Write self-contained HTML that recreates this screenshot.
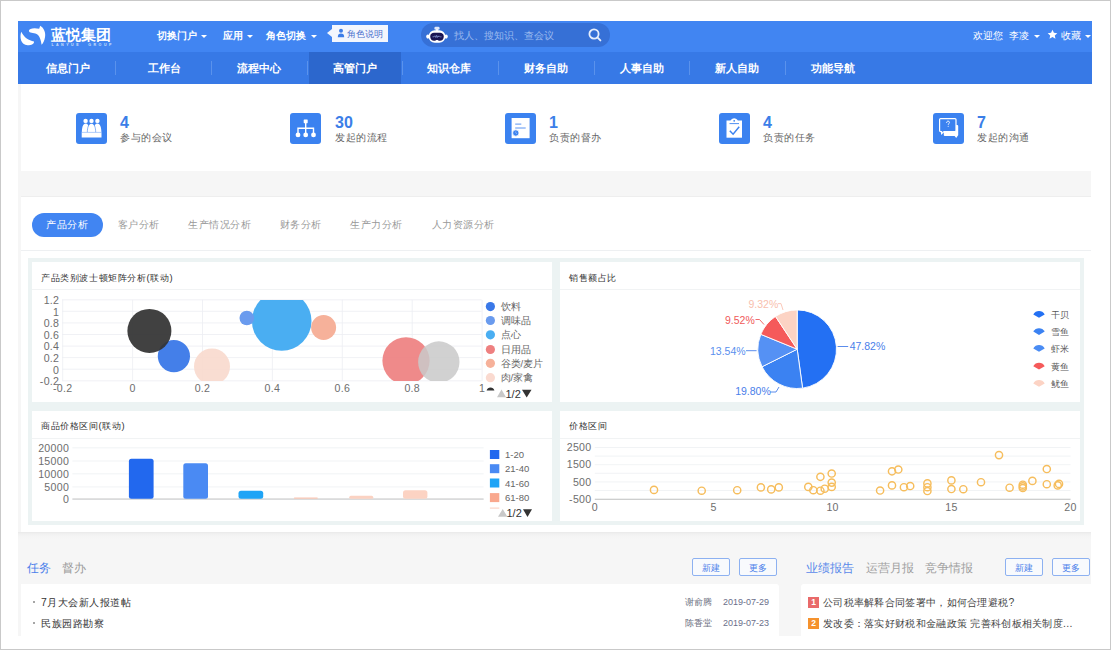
<!DOCTYPE html>
<html><head><meta charset="utf-8">
<style>
*{margin:0;padding:0;box-sizing:border-box}
html,body{width:1111px;height:650px;overflow:hidden;background:#fff}
body{position:relative;font-family:"Liberation Sans",sans-serif;color:#333}
#frame{position:absolute;left:0;top:0;width:1111px;height:650px;border:1px solid #c9c9c9;z-index:50}
.a{position:absolute;white-space:nowrap;line-height:1}
.bx{position:absolute}
svg{position:absolute;overflow:visible}
#top{position:absolute;left:18px;top:21px;width:1074px;height:31px;background:#4185f2}
#nav{position:absolute;left:18px;top:52px;width:1074px;height:32px;background:#3779e6}
.nv{position:absolute;top:52px;height:32px;line-height:32px;color:#fff;font-weight:bold;font-size:11.3px;text-align:center}
.sep{position:absolute;top:61px;width:1px;height:14px;background:#5a92ec}
.tw{color:#fff;font-size:10.3px;font-weight:bold}
.caret{position:absolute;width:0;height:0;border-left:3px solid transparent;border-right:3px solid transparent;border-top:3px solid #fff}
.ic{position:absolute;top:113px;width:31px;height:31px;background:#3b82f0;border-radius:3px}
.num{position:absolute;top:115px;font-size:16px;font-weight:bold;color:#3b7ee8;line-height:1}
.lab{position:absolute;top:133px;font-size:10.4px;letter-spacing:0.6px;color:#666;line-height:1}
.tab{position:absolute;top:213px;height:23.5px;line-height:23.5px;font-size:10.4px;letter-spacing:0.5px;color:#999;padding:0 14.5px;white-space:nowrap}
.tab.on{background:#4185f2;color:#fff;border-radius:12px}
.cell{position:absolute;background:#fff;overflow:hidden}
.ct{position:absolute;left:9px;top:10px;font-size:9.4px;letter-spacing:0.6px;color:#333;line-height:1;white-space:nowrap}
.cd{position:absolute;left:0;right:0;top:27px;height:1px;background:#f2f4f5}
.ax{font-family:"Liberation Sans",sans-serif;font-size:10.6px;letter-spacing:0.3px;fill:#6e6e6e}
.lg{font-size:9.5px;color:#666}
.btn{position:absolute;top:558px;width:38px;height:18px;border:1px solid #8db1f1;border-radius:2px;background:#f8fafd;color:#4a80ea;font-size:9px;line-height:19px;text-align:center}
.badge{width:11px;height:10.5px;color:#fff;font-size:8.5px;line-height:10.5px;text-align:center;font-weight:bold}
</style></head><body>
<div id="frame"></div>
<!-- header -->
<div id="top"></div>
<div id="nav"></div>
<svg style="left:18px;top:22px" width="40" height="28" viewBox="0 0 40 28">
<path fill="#fff" d="M3.3 9.8 C1.4 15 2.8 23.2 9.6 23.2 C13.6 23.2 16.4 21.8 16 19.5 C10.8 18.6 6 15.6 3.3 9.8 Z"/>
<path fill="#fff" d="M10.9 8.8 C11 6.6 15.6 5.6 21.2 6.8 L22.2 3.8 C26 6 28 11 27 15.2 C26.4 18.6 25.2 21.2 23.6 22.8 C23 18.4 21.8 13.8 18.6 12 C15.6 10.6 11 11.4 10.9 8.8 Z"/>
</svg>
<div class="a" style="left:50.5px;top:26.5px;font-size:15.4px;color:#fff;font-weight:bold">蓝悦集团</div>
<svg style="left:51px;top:42px" width="61" height="4" viewBox="0 0 61 4"><text x="0.5" y="3.6" font-size="3.6" fill="#cfe0fb" font-family="Liberation Sans" font-weight="bold" textLength="60" lengthAdjust="spacing">L A N Y U E &#160; &#160; G R O U P</text></svg>
<div class="a tw" style="left:156.5px;top:30.5px">切换门户</div><div class="caret" style="left:201px;top:35px"></div>
<div class="a tw" style="left:222.5px;top:30.5px">应用</div><div class="caret" style="left:247px;top:35px"></div>
<div class="a tw" style="left:266px;top:30.5px">角色切换</div><div class="caret" style="left:311px;top:35px"></div>
<div class="bx" style="left:332px;top:25px;width:56px;height:17px;background:#f3f6fd"></div>
<div class="bx" style="left:327px;top:29px;width:0;height:0;border-top:4px solid transparent;border-bottom:4px solid transparent;border-right:5px solid #f3f6fd"></div>
<svg style="left:337px;top:28px" width="8" height="10" viewBox="0 0 8 10"><circle cx="4" cy="2.8" r="2" fill="#3d7de8"/><path d="M0.8 9.2 C0.8 6.6 2 5.5 4 5.5 C6 5.5 7.2 6.6 7.2 9.2 Z" fill="#3d7de8"/></svg>
<div class="a" style="left:347px;top:29.5px;font-size:9px;color:#4a70cc;font-weight:500">角色说明</div>
<!-- search -->
<div class="bx" style="left:421px;top:23px;width:189px;height:24px;border-radius:12px;background:#3670d6"></div>
<svg style="left:426px;top:26px" width="22" height="18" viewBox="0 0 22 18">
<rect x="8.4" y="0.8" width="5.2" height="3" rx="1.3" fill="#dfe8fb"/>
<rect x="10" y="3" width="2" height="2" fill="#eef3fd"/>
<ellipse cx="1.9" cy="10.6" rx="1.7" ry="2.1" fill="#fff"/><ellipse cx="20.1" cy="10.6" rx="1.7" ry="2.1" fill="#fff"/>
<rect x="2.6" y="4.2" width="16.8" height="12.6" rx="6.2" fill="#fff"/>
<path d="M4.2 10.6 C4.2 8 6 6.8 8 6.8 H14 C16 6.8 17.8 8 17.8 10.6 C17.8 13.4 16 14.8 14 14.8 C12.6 14.8 12 14 11 14 C10 14 9.4 14.8 8 14.8 C6 14.8 4.2 13.4 4.2 10.6 Z" fill="#1b1553"/>
<path d="M6.5 10.8 H8 L8.8 9.8 L9.6 11.4 L10.4 9.4 L11.2 11.6 L12 9.8 L12.8 11 L13.6 10.2 L14.4 10.8 H15.5" stroke="#9fb6f0" stroke-width="0.6" fill="none"/>
</svg>
<div class="a" style="left:453.5px;top:30.5px;font-size:9.6px;color:#98b8ee">找人、搜知识、查会议</div>
<svg style="left:587px;top:27px" width="16" height="16" viewBox="0 0 16 16"><circle cx="7" cy="7" r="4.6" stroke="#e6eefc" stroke-width="1.8" fill="none"/><path d="M10.4 10.4 L13.4 13.4" stroke="#e6eefc" stroke-width="1.9" stroke-linecap="round"/></svg>
<!-- right -->
<div class="a tw" style="left:973px;top:30.5px;font-weight:500">欢迎您</div>
<div class="a tw" style="left:1009px;top:30.5px;font-weight:500">李凌</div><div class="caret" style="left:1034px;top:35px"></div>
<svg style="left:1047px;top:29px" width="11" height="11" viewBox="0 0 24 24"><path fill="#fff" d="M12 1.5 L15.1 8.2 L22.5 9 L17 14 L18.5 21.3 L12 17.6 L5.5 21.3 L7 14 L1.5 9 L8.9 8.2 Z"/></svg>
<div class="a tw" style="left:1060.5px;top:30.5px;font-weight:500">收藏</div><div class="caret" style="left:1085px;top:35px"></div>
<!-- nav -->
<div class="bx" style="left:309px;top:52px;width:92px;height:32px;background:#2c67cd"></div>
<div class="sep" style="left:115px"></div><div class="sep" style="left:211px"></div><div class="sep" style="left:307px"></div><div class="sep" style="left:402px"></div><div class="sep" style="left:498px"></div><div class="sep" style="left:594px"></div><div class="sep" style="left:689px"></div><div class="sep" style="left:785px"></div>
<div class="nv" style="left:28.0px;width:80px">信息门户</div>
<div class="nv" style="left:124.0px;width:80px">工作台</div>
<div class="nv" style="left:219.0px;width:80px">流程中心</div>
<div class="nv" style="left:314.6px;width:80px">高管门户</div>
<div class="nv" style="left:409.0px;width:80px">知识仓库</div>
<div class="nv" style="left:505.6px;width:80px">财务自助</div>
<div class="nv" style="left:601.6px;width:80px">人事自助</div>
<div class="nv" style="left:696.6px;width:80px">新人自助</div>
<div class="nv" style="left:793.0px;width:80px">功能导航</div>
<!-- stats -->
<div class="bx" style="left:18px;top:171px;width:1073px;height:26px;background:#f6f6f6;border-bottom:1px solid #eeeeee"></div>
<div class="bx" style="left:18px;top:84px;width:3px;height:552px;background:#f6f6f6"></div>
<div class="ic" style="left:76px"><svg style="left:0;top:0" width="31" height="31" viewBox="0 0 31 31">
<path d="M5.8 19.6 C5.8 14.6 7 10.4 9.6 10.4 C11.6 10.4 12.6 12.4 12.9 14.5 L12.9 19.6 Z" fill="#fff"/>
<path d="M25.4 19.6 C25.4 14.6 24.2 10.4 21.4 10.4 C19.4 10.4 18.4 12.4 18.1 14.5 L18.1 19.6 Z" fill="#fff"/>
<path d="M11.3 19.8 C11.3 14 12.8 10.4 15.5 10.4 C18.2 10.4 19.7 14 19.7 19.8 Z" fill="#fff" stroke="#3b82f0" stroke-width="0.6"/>
<circle cx="9.6" cy="7.9" r="2.2" fill="#fff"/><circle cx="15.5" cy="7.9" r="2.2" fill="#fff"/><circle cx="21.4" cy="7.9" r="2.2" fill="#fff"/>
<rect x="5.7" y="19.5" width="19.8" height="5" fill="#fff"/>
<path d="M5.7 19.3 H25.5" stroke="#9cc0f8" stroke-width="0.5"/>
</svg></div>
<div class="ic" style="left:290px"><svg style="left:0;top:0" width="31" height="31" viewBox="0 0 31 31">
<rect x="13.7" y="6.5" width="4" height="3.7" rx="0.6" fill="#fff"/>
<path d="M15.7 10 V21 M8 21.5 V15.3 H23.5 V21.5" stroke="#fff" stroke-width="1.4" fill="none"/>
<circle cx="8" cy="21.9" r="2.4" fill="#fff"/><circle cx="15.7" cy="21.9" r="2.4" fill="#fff"/><circle cx="23.5" cy="21.9" r="2.4" fill="#fff"/>
</svg></div>
<div class="ic" style="left:504.5px"><svg style="left:0;top:0" width="31" height="31" viewBox="0 0 31 31">
<rect x="6.6" y="5" width="18" height="20.2" fill="#fff"/>
<path d="M10.2 11.1 H16.3 M10.2 15 H20.7" stroke="#5a94f2" stroke-width="1" fill="none"/>
<circle cx="10.8" cy="20" r="3.2" fill="#3b82f0" stroke="#fff" stroke-width="0.8"/>
<path d="M10.8 18.3 V20 L12.2 21" stroke="#9ec0f8" stroke-width="0.7" fill="none"/>
</svg></div>
<div class="ic" style="left:718.5px"><svg style="left:0;top:0" width="31" height="31" viewBox="0 0 31 31">
<rect x="7.5" y="7.5" width="15.5" height="17.2" fill="#fff"/>
<path d="M11 10.3 C11 7.5 12.5 5.3 15.2 5.3 C17.9 5.3 19.3 7.5 19.3 10.3 Z" fill="#fff"/>
<path d="M10.5 10.6 H20" stroke="#3b82f0" stroke-width="0.9"/>
<circle cx="15.2" cy="7.8" r="0.9" fill="#3b82f0"/>
<path d="M10.8 17.8 L14.1 21.2 L20.2 13.8" stroke="#3b82f0" stroke-width="1.5" fill="none"/>
</svg></div>
<div class="ic" style="left:932.5px"><svg style="left:0;top:0" width="31" height="31" viewBox="0 0 31 31">
<path d="M10.8 13 Q10.8 12 11.8 12 H24.2 Q25.2 12 25.2 13 V22 Q25.2 23 24.2 23 H24.6 L23.2 25 L21.6 23 H11.8 Q10.8 23 10.8 22 Z" fill="#fff"/>
<path d="M7.6 5.6 H22 Q23 5.6 23 6.6 V17.6 Q23 18.6 22 18.6 H11 L8.6 20.6 V18.6 H7.6 Q6.6 18.6 6.6 17.6 V6.6 Q6.6 5.6 7.6 5.6 Z" fill="#3b82f0" stroke="#fff" stroke-width="1.2"/>
<path d="M13.6 10 C13.6 8.7 14.3 8.1 15.1 8.1 C15.9 8.1 16.5 8.7 16.5 9.4 C16.5 10.4 15.2 10.6 15.2 11.8" stroke="#fff" stroke-width="0.9" fill="none"/>
<circle cx="15.2" cy="13.2" r="0.55" fill="#fff"/>
</svg></div>
<div class="num" style="left:120px">4</div><div class="lab" style="left:120px">参与的会议</div>
<div class="num" style="left:335px">30</div><div class="lab" style="left:335px">发起的流程</div>
<div class="num" style="left:549px">1</div><div class="lab" style="left:549px">负责的督办</div>
<div class="num" style="left:763px">4</div><div class="lab" style="left:763px">负责的任务</div>
<div class="num" style="left:977px">7</div><div class="lab" style="left:977px">发起的沟通</div>
<!-- tabs section -->
<div class="bx" style="left:21px;top:197px;width:1070px;height:335px;background:#fff"></div>
<div class="bx" style="left:21px;top:250px;width:1070px;height:1px;background:#eef0f2"></div>
<div class="tab on" style="left:31.8px;width:71.5px">产品分析</div>
<div class="tab" style="left:103px">客户分析</div>
<div class="tab" style="left:173.5px">生产情况分析</div>
<div class="tab" style="left:265.2px">财务分析</div>
<div class="tab" style="left:335.8px">生产力分析</div>
<div class="tab" style="left:417.3px">人力资源分析</div>
<div class="bx" style="left:28px;top:258px;width:1056px;height:267px;background:#ecf3f3"></div>
<div class="cell" style="left:32px;top:262px;width:520px;height:140px"></div>
<div class="cell" style="left:560px;top:262px;width:520px;height:140px"></div>
<div class="cell" style="left:32px;top:411px;width:520px;height:110px"></div>
<div class="cell" style="left:560px;top:411px;width:520px;height:110px"></div>
<div class="a ct" style="left:41px;top:272.5px">产品类别波士顿矩阵分析(联动)</div>
<div class="a ct" style="left:569px;top:272.5px">销售额占比</div>
<div class="a ct" style="left:41px;top:420.5px">商品价格区间(联动)</div>
<div class="a ct" style="left:569px;top:420.5px">价格区间</div>
<svg style="left:0;top:0" width="1111" height="650" viewBox="0 0 1111 650">
<defs><clipPath id="c1"><rect x="62" y="299.9" width="419.5" height="81"/></clipPath></defs>
<line x1="32" x2="552" y1="289.5" y2="289.5" stroke="#f1f3f4" stroke-width="1"/>
<line x1="560" x2="1080" y1="289.5" y2="289.5" stroke="#f1f3f4" stroke-width="1"/>
<line x1="32" x2="552" y1="438.5" y2="438.5" stroke="#f1f3f4" stroke-width="1"/>
<line x1="560" x2="1080" y1="438.5" y2="438.5" stroke="#f1f3f4" stroke-width="1"/>
<line x1="62" x2="481.5" y1="380.8" y2="380.8" stroke="#eceef2" stroke-width="0.8"/>
<text class="ax" x="59.3" y="385.1" text-anchor="end">-0.2</text>
<line x1="62" x2="481.5" y1="369.2" y2="369.2" stroke="#eceef2" stroke-width="0.8"/>
<text class="ax" x="59.3" y="373.5" text-anchor="end">0</text>
<line x1="62" x2="481.5" y1="357.6" y2="357.6" stroke="#eceef2" stroke-width="0.8"/>
<text class="ax" x="59.3" y="361.9" text-anchor="end">0.2</text>
<line x1="62" x2="481.5" y1="346.1" y2="346.1" stroke="#eceef2" stroke-width="0.8"/>
<text class="ax" x="59.3" y="350.4" text-anchor="end">0.4</text>
<line x1="62" x2="481.5" y1="334.5" y2="334.5" stroke="#eceef2" stroke-width="0.8"/>
<text class="ax" x="59.3" y="338.8" text-anchor="end">0.6</text>
<line x1="62" x2="481.5" y1="322.9" y2="322.9" stroke="#eceef2" stroke-width="0.8"/>
<text class="ax" x="59.3" y="327.2" text-anchor="end">0.8</text>
<line x1="62" x2="481.5" y1="311.3" y2="311.3" stroke="#eceef2" stroke-width="0.8"/>
<text class="ax" x="59.3" y="315.6" text-anchor="end">1</text>
<line x1="62" x2="481.5" y1="299.8" y2="299.8" stroke="#eceef2" stroke-width="0.8"/>
<text class="ax" x="59.3" y="304.1" text-anchor="end">1.2</text>
<line x1="62.7" x2="62.7" y1="299.9" y2="380.9" stroke="#eceef2" stroke-width="0.8"/>
<text class="ax" x="62.7" y="391.8" text-anchor="middle">-0.2</text>
<line x1="132.6" x2="132.6" y1="299.9" y2="380.9" stroke="#eceef2" stroke-width="0.8"/>
<text class="ax" x="132.6" y="391.8" text-anchor="middle">0</text>
<line x1="202.5" x2="202.5" y1="299.9" y2="380.9" stroke="#eceef2" stroke-width="0.8"/>
<text class="ax" x="202.5" y="391.8" text-anchor="middle">0.2</text>
<line x1="272.4" x2="272.4" y1="299.9" y2="380.9" stroke="#eceef2" stroke-width="0.8"/>
<text class="ax" x="272.4" y="391.8" text-anchor="middle">0.4</text>
<line x1="342.3" x2="342.3" y1="299.9" y2="380.9" stroke="#eceef2" stroke-width="0.8"/>
<text class="ax" x="342.3" y="391.8" text-anchor="middle">0.6</text>
<line x1="412.2" x2="412.2" y1="299.9" y2="380.9" stroke="#eceef2" stroke-width="0.8"/>
<text class="ax" x="412.2" y="391.8" text-anchor="middle">0.8</text>
<line x1="482.1" x2="482.1" y1="299.9" y2="380.9" stroke="#eceef2" stroke-width="0.8"/>
<text class="ax" x="482.1" y="391.8" text-anchor="middle">1</text>
<g clip-path="url(#c1)">
<circle cx="173.9" cy="356.2" r="16.1" fill="#3a78e8" fill-opacity="0.95"/>
<circle cx="149.4" cy="330.9" r="22" fill="#333333" fill-opacity="0.93"/>
<circle cx="212" cy="366.5" r="18" fill="#f8d9cd" fill-opacity="0.9"/>
<circle cx="281.7" cy="320.9" r="29.8" fill="#4aaef2" fill-opacity="1"/>
<circle cx="246.8" cy="318" r="7.3" fill="#6a9bee" fill-opacity="1"/>
<circle cx="323.6" cy="327.5" r="12.5" fill="#f6b19a" fill-opacity="1"/>
<circle cx="406" cy="360.8" r="23.6" fill="#ee8080" fill-opacity="0.92"/>
<circle cx="438.8" cy="362" r="20.7" fill="#c9c9c9" fill-opacity="0.85"/>
</g>
<circle cx="490.4" cy="306.6" r="4.6" fill="#3a78e8"/>
<text x="500.5" y="310.0" font-size="9.5" fill="#666" font-family="Liberation Sans">饮料</text>
<circle cx="490.4" cy="320.5" r="4.6" fill="#6a9bee"/>
<text x="500.5" y="323.9" font-size="9.5" fill="#666" font-family="Liberation Sans">调味品</text>
<circle cx="490.4" cy="334.8" r="4.6" fill="#4aaef2"/>
<text x="500.5" y="338.2" font-size="9.5" fill="#666" font-family="Liberation Sans">点心</text>
<circle cx="490.4" cy="349.5" r="4.6" fill="#ee8080"/>
<text x="500.5" y="352.9" font-size="9.5" fill="#666" font-family="Liberation Sans">日用品</text>
<circle cx="490.4" cy="363.3" r="4.6" fill="#f6b19a"/>
<text x="500.5" y="366.7" font-size="9.5" fill="#666" font-family="Liberation Sans">谷类/麦片</text>
<circle cx="490.4" cy="377.7" r="4.6" fill="#fadad0"/>
<text x="500.5" y="381.1" font-size="9.5" fill="#666" font-family="Liberation Sans">肉/家禽</text>
<path d="M486.6 390.6 C487.4 386.6 493.6 386.6 494.4 390.6 Z" fill="#333"/>
<path d="M497 397.3 L501.5 389.5 L506 397.3Z" fill="#c8c8c8"/>
<text x="505.5" y="397.5" font-size="11" fill="#333" font-family="Liberation Sans">1/2</text>
<path d="M522 389.8 L531.5 389.8 L526.7 397.5Z" fill="#333"/>
<path d="M797.2 349.2 L797.20 309.90 A39.3 39.3 0 0 1 802.57 388.13 Z" fill="#2370f3" stroke="#fff" stroke-width="0.9" stroke-linejoin="round"/>
<path d="M797.2 349.2 L802.57 388.13 A39.3 39.3 0 0 1 762.05 366.78 Z" fill="#3b82f2" stroke="#fff" stroke-width="0.9" stroke-linejoin="round"/>
<path d="M797.2 349.2 L762.05 366.78 A39.3 39.3 0 0 1 760.81 334.37 Z" fill="#5591f4" stroke="#fff" stroke-width="0.9" stroke-linejoin="round"/>
<path d="M797.2 349.2 L760.81 334.37 A39.3 39.3 0 0 1 775.48 316.45 Z" fill="#f55a5a" stroke="#fff" stroke-width="0.9" stroke-linejoin="round"/>
<path d="M797.2 349.2 L775.48 316.45 A39.3 39.3 0 0 1 797.20 309.90 Z" fill="#fcd3c4" stroke="#fff" stroke-width="0.9" stroke-linejoin="round"/>
<path d="M837.6 346.5 H848.2" stroke="#4a80ea" stroke-width="0.9"/>
<text x="849.7" y="350.3" font-size="10.5" fill="#4a80ea" font-family="Liberation Sans">47.82%</text>
<path d="M779 387 L776 392 H770" stroke="#4a80ea" stroke-width="0.9" fill="none"/>
<text x="735.2" y="395.3" font-size="10.5" fill="#4a80ea" font-family="Liberation Sans">19.80%</text>
<path d="M746 350.7 H756.6" stroke="#4a80ea" stroke-width="0.9"/>
<text x="710" y="355.3" font-size="10.5" fill="#5a8fee" font-family="Liberation Sans">13.54%</text>
<path d="M755.5 319.5 L759.5 319.5 L764 324.5" stroke="#f05a5a" stroke-width="0.9" fill="none"/>
<text x="725" y="323.6" font-size="10.5" fill="#f05a5a" font-family="Liberation Sans">9.52%</text>
<path d="M778 303.6 L781 303.6 L783 310" stroke="#fac2b2" stroke-width="0.9" fill="none"/>
<text x="748.5" y="308.4" font-size="10.5" fill="#f8c0ae" font-family="Liberation Sans">9.32%</text>
<path d="M1033.3 314.4 C1035.5 309.8 1042.5 309.8 1044.7 314.4 L1039 317.7 Z" fill="#2370f3"/>
<text x="1050.6" y="318.0" font-size="9.4" fill="#585858" font-family="Liberation Sans">干贝</text>
<path d="M1033.3 331.6 C1035.5 327.0 1042.5 327.0 1044.7 331.6 L1039 334.9 Z" fill="#3b82f2"/>
<text x="1050.6" y="335.2" font-size="9.4" fill="#585858" font-family="Liberation Sans">雪鱼</text>
<path d="M1033.3 348.5 C1035.5 343.9 1042.5 343.9 1044.7 348.5 L1039 351.8 Z" fill="#4a8cf4"/>
<text x="1050.6" y="352.1" font-size="9.4" fill="#585858" font-family="Liberation Sans">虾米</text>
<path d="M1033.3 366.2 C1035.5 361.6 1042.5 361.6 1044.7 366.2 L1039 369.5 Z" fill="#f55a5a"/>
<text x="1050.6" y="369.8" font-size="9.4" fill="#585858" font-family="Liberation Sans">黄鱼</text>
<path d="M1033.3 383.4 C1035.5 378.8 1042.5 378.8 1044.7 383.4 L1039 386.7 Z" fill="#fcd3c4"/>
<text x="1050.6" y="387.0" font-size="9.4" fill="#585858" font-family="Liberation Sans">鱿鱼</text>
<line x1="72.4" x2="483.6" y1="447.8" y2="447.8" stroke="#eef0f3" stroke-width="0.8"/>
<text class="ax" x="69.1" y="451.5" text-anchor="end">20000</text>
<line x1="72.4" x2="483.6" y1="461" y2="461" stroke="#eef0f3" stroke-width="0.8"/>
<text class="ax" x="69.1" y="464.7" text-anchor="end">15000</text>
<line x1="72.4" x2="483.6" y1="473.8" y2="473.8" stroke="#eef0f3" stroke-width="0.8"/>
<text class="ax" x="69.1" y="477.5" text-anchor="end">10000</text>
<line x1="72.4" x2="483.6" y1="486.9" y2="486.9" stroke="#eef0f3" stroke-width="0.8"/>
<text class="ax" x="69.1" y="490.6" text-anchor="end">5000</text>
<line x1="72.4" x2="483.6" y1="499.5" y2="499.5" stroke="#eef0f3" stroke-width="0.8"/>
<text class="ax" x="69.1" y="503.2" text-anchor="end">0</text>
<line x1="72.4" x2="483.6" y1="499" y2="499" stroke="#c4c4c4" stroke-width="1"/>
<rect x="128.9" y="458.7" width="24.7" height="40.0" rx="2.5" fill="#2268ee"/>
<rect x="183.3" y="463.2" width="24.7" height="35.5" rx="2.5" fill="#4a8af3"/>
<rect x="238.5" y="490.7" width="24.7" height="8.0" rx="2.5" fill="#1fa4f6"/>
<rect x="293.9" y="497.5" width="23.9" height="1.2" rx="0.5999999999999943" fill="#f9c6b4"/>
<rect x="349.3" y="495.7" width="23.9" height="3.0" rx="1.5" fill="#fbd2c2"/>
<rect x="403" y="490.2" width="24.4" height="8.5" rx="2.5" fill="#fcd3c3"/>
<rect x="489.9" y="450.0" width="9.4" height="9" fill="#2268ee"/>
<text x="505" y="458.2" font-size="9.5" fill="#666" font-family="Liberation Sans">1-20</text>
<rect x="489.9" y="464.2" width="9.4" height="9" fill="#4a8af3"/>
<text x="505" y="472.4" font-size="9.5" fill="#666" font-family="Liberation Sans">21-40</text>
<rect x="489.9" y="478.5" width="9.4" height="9" fill="#1fa4f6"/>
<text x="505" y="486.7" font-size="9.5" fill="#666" font-family="Liberation Sans">41-60</text>
<rect x="489.9" y="493.1" width="9.4" height="9" fill="#f9a88e"/>
<text x="505" y="501.3" font-size="9.5" fill="#666" font-family="Liberation Sans">61-80</text>
<rect x="489.9" y="507.5" width="9.4" height="1.2" fill="#fbd5c8"/>
<path d="M498 516.8 L502.7 509 L507.4 516.8Z" fill="#c8c8c8"/>
<text x="506.5" y="517.2" font-size="11" fill="#333" font-family="Liberation Sans">1/2</text>
<path d="M523 509.3 L532 509.3 L527.5 517Z" fill="#333"/>
<line x1="594.8" x2="1070.5" y1="447.5" y2="447.5" stroke="#eef0f3" stroke-width="0.8"/>
<line x1="594.8" x2="1070.5" y1="456.1" y2="456.1" stroke="#eef0f3" stroke-width="0.8"/>
<line x1="594.8" x2="1070.5" y1="464.7" y2="464.7" stroke="#eef0f3" stroke-width="0.8"/>
<line x1="594.8" x2="1070.5" y1="473.3" y2="473.3" stroke="#eef0f3" stroke-width="0.8"/>
<line x1="594.8" x2="1070.5" y1="481.9" y2="481.9" stroke="#eef0f3" stroke-width="0.8"/>
<line x1="594.8" x2="1070.5" y1="490.5" y2="490.5" stroke="#eef0f3" stroke-width="0.8"/>
<line x1="594.8" x2="1070.5" y1="499.1" y2="499.1" stroke="#eef0f3" stroke-width="0.8"/>
<text class="ax" x="591.5" y="451.2" text-anchor="end">2500</text>
<text class="ax" x="591.5" y="468.4" text-anchor="end">1500</text>
<text class="ax" x="591.5" y="485.6" text-anchor="end">500</text>
<text class="ax" x="591.5" y="502.8" text-anchor="end">-500</text>
<line x1="594.8" x2="1070.5" y1="499.3" y2="499.3" stroke="#c4c4c4" stroke-width="1"/>
<text class="ax" x="594.8" y="511.3" text-anchor="middle">0</text>
<text class="ax" x="713.7" y="511.3" text-anchor="middle">5</text>
<text class="ax" x="832.6" y="511.3" text-anchor="middle">10</text>
<text class="ax" x="951.5" y="511.3" text-anchor="middle">15</text>
<text class="ax" x="1070.4" y="511.3" text-anchor="middle">20</text>
<circle cx="654" cy="489.9" r="3.6" fill="none" stroke="#f6bd5c" stroke-width="1.45"/>
<circle cx="701.7" cy="490.7" r="3.6" fill="none" stroke="#f6bd5c" stroke-width="1.45"/>
<circle cx="737.2" cy="490.2" r="3.6" fill="none" stroke="#f6bd5c" stroke-width="1.45"/>
<circle cx="760.9" cy="487.4" r="3.6" fill="none" stroke="#f6bd5c" stroke-width="1.45"/>
<circle cx="771.2" cy="489.4" r="3.6" fill="none" stroke="#f6bd5c" stroke-width="1.45"/>
<circle cx="778.8" cy="487.4" r="3.6" fill="none" stroke="#f6bd5c" stroke-width="1.45"/>
<circle cx="808.3" cy="486.9" r="3.6" fill="none" stroke="#f6bd5c" stroke-width="1.45"/>
<circle cx="813.3" cy="490.2" r="3.6" fill="none" stroke="#f6bd5c" stroke-width="1.45"/>
<circle cx="820.4" cy="490.7" r="3.6" fill="none" stroke="#f6bd5c" stroke-width="1.45"/>
<circle cx="824.7" cy="488.7" r="3.6" fill="none" stroke="#f6bd5c" stroke-width="1.45"/>
<circle cx="820.4" cy="476.8" r="3.6" fill="none" stroke="#f6bd5c" stroke-width="1.45"/>
<circle cx="831.7" cy="473.5" r="3.6" fill="none" stroke="#f6bd5c" stroke-width="1.45"/>
<circle cx="831.7" cy="482.6" r="3.6" fill="none" stroke="#f6bd5c" stroke-width="1.45"/>
<circle cx="831.7" cy="486.9" r="3.6" fill="none" stroke="#f6bd5c" stroke-width="1.45"/>
<circle cx="880.1" cy="490.5" r="3.6" fill="none" stroke="#f6bd5c" stroke-width="1.45"/>
<circle cx="892" cy="471.3" r="3.6" fill="none" stroke="#f6bd5c" stroke-width="1.45"/>
<circle cx="898.3" cy="469.5" r="3.6" fill="none" stroke="#f6bd5c" stroke-width="1.45"/>
<circle cx="892" cy="485.4" r="3.6" fill="none" stroke="#f6bd5c" stroke-width="1.45"/>
<circle cx="903.9" cy="487.2" r="3.6" fill="none" stroke="#f6bd5c" stroke-width="1.45"/>
<circle cx="910.2" cy="486" r="3.6" fill="none" stroke="#f6bd5c" stroke-width="1.45"/>
<circle cx="927.4" cy="483.4" r="3.6" fill="none" stroke="#f6bd5c" stroke-width="1.45"/>
<circle cx="927.4" cy="487.2" r="3.6" fill="none" stroke="#f6bd5c" stroke-width="1.45"/>
<circle cx="927.4" cy="491" r="3.6" fill="none" stroke="#f6bd5c" stroke-width="1.45"/>
<circle cx="951.4" cy="480.4" r="3.6" fill="none" stroke="#f6bd5c" stroke-width="1.45"/>
<circle cx="951.4" cy="489" r="3.6" fill="none" stroke="#f6bd5c" stroke-width="1.45"/>
<circle cx="963.3" cy="489.2" r="3.6" fill="none" stroke="#f6bd5c" stroke-width="1.45"/>
<circle cx="981" cy="482.2" r="3.6" fill="none" stroke="#f6bd5c" stroke-width="1.45"/>
<circle cx="999" cy="455.1" r="3.6" fill="none" stroke="#f6bd5c" stroke-width="1.45"/>
<circle cx="1009.6" cy="487.7" r="3.6" fill="none" stroke="#f6bd5c" stroke-width="1.45"/>
<circle cx="1022.8" cy="484.7" r="3.6" fill="none" stroke="#f6bd5c" stroke-width="1.45"/>
<circle cx="1022.8" cy="486.4" r="3.6" fill="none" stroke="#f6bd5c" stroke-width="1.45"/>
<circle cx="1022.8" cy="488" r="3.6" fill="none" stroke="#f6bd5c" stroke-width="1.45"/>
<circle cx="1032.4" cy="480.9" r="3.6" fill="none" stroke="#f6bd5c" stroke-width="1.45"/>
<circle cx="1046.8" cy="469" r="3.6" fill="none" stroke="#f6bd5c" stroke-width="1.45"/>
<circle cx="1046.8" cy="484.2" r="3.6" fill="none" stroke="#f6bd5c" stroke-width="1.45"/>
<circle cx="1057.7" cy="485.4" r="3.6" fill="none" stroke="#f6bd5c" stroke-width="1.45"/>
<circle cx="1059" cy="483.9" r="3.6" fill="none" stroke="#f6bd5c" stroke-width="1.45"/>
</svg>
<!-- bottom -->
<div class="bx" style="left:18px;top:532px;width:1073px;height:104px;background:linear-gradient(#e9e9e9 0px,#f1f1f1 2px,#f5f5f5 5px,#f6f6f6 8px)"></div>
<div class="a" style="left:27px;top:562px;font-size:11.6px;color:#4a80ea">任务</div>
<div class="a" style="left:61.5px;top:562px;font-size:11.6px;color:#999">督办</div>
<div class="btn" style="left:692px">新建</div>
<div class="btn" style="left:739px">更多</div>
<div class="bx" style="left:21px;top:584px;width:758px;height:52px;background:#fff;border-radius:0 3px 0 0"></div>
<div class="bx" style="left:33px;top:601px;width:2px;height:2px;background:#888;border-radius:1px"></div>
<div class="a" style="left:41px;top:598px;font-size:10.4px;letter-spacing:0.5px;color:#333">7月大会新人报道帖</div>
<div class="bx" style="left:33px;top:622px;width:2px;height:2px;background:#888;border-radius:1px"></div>
<div class="a" style="left:41px;top:619px;font-size:10.4px;letter-spacing:0.5px;color:#333">民族园路勘察</div>
<div class="a" style="left:685px;top:598px;font-size:9px;color:#6a6e7e">谢俞腾</div>
<div class="a" style="left:723px;top:598px;font-size:9px;color:#6a6e8a">2019-07-29</div>
<div class="a" style="left:685px;top:619px;font-size:9px;color:#6a6e7e">陈香堂</div>
<div class="a" style="left:723px;top:619px;font-size:9px;color:#6a6e8a">2019-07-23</div>
<div class="a" style="left:806px;top:562px;font-size:12px;color:#5a8aea">业绩报告</div>
<div class="a" style="left:866px;top:562px;font-size:12px;color:#a0a0a0">运营月报</div>
<div class="a" style="left:925px;top:562px;font-size:12px;color:#a0a0a0">竞争情报</div>
<div class="btn" style="left:1005px">新建</div>
<div class="btn" style="left:1052px">更多</div>
<div class="bx" style="left:801px;top:584px;width:290px;height:52px;background:#fff;border-radius:3px 0 0 0"></div>
<div class="bx badge" style="left:808px;top:597px;background:#e96a6a">1</div>
<div class="a" style="left:823px;top:597.5px;font-size:10.4px;letter-spacing:0.3px;color:#444">公司税率解释合同签署中，如何合理避税?</div>
<div class="bx badge" style="left:808px;top:618px;background:#f5922e">2</div>
<div class="a" style="left:823px;top:618.5px;font-size:10.4px;letter-spacing:0.3px;color:#444">发改委：落实好财税和金融政策 完善科创板相关制度...</div>
</body></html>
